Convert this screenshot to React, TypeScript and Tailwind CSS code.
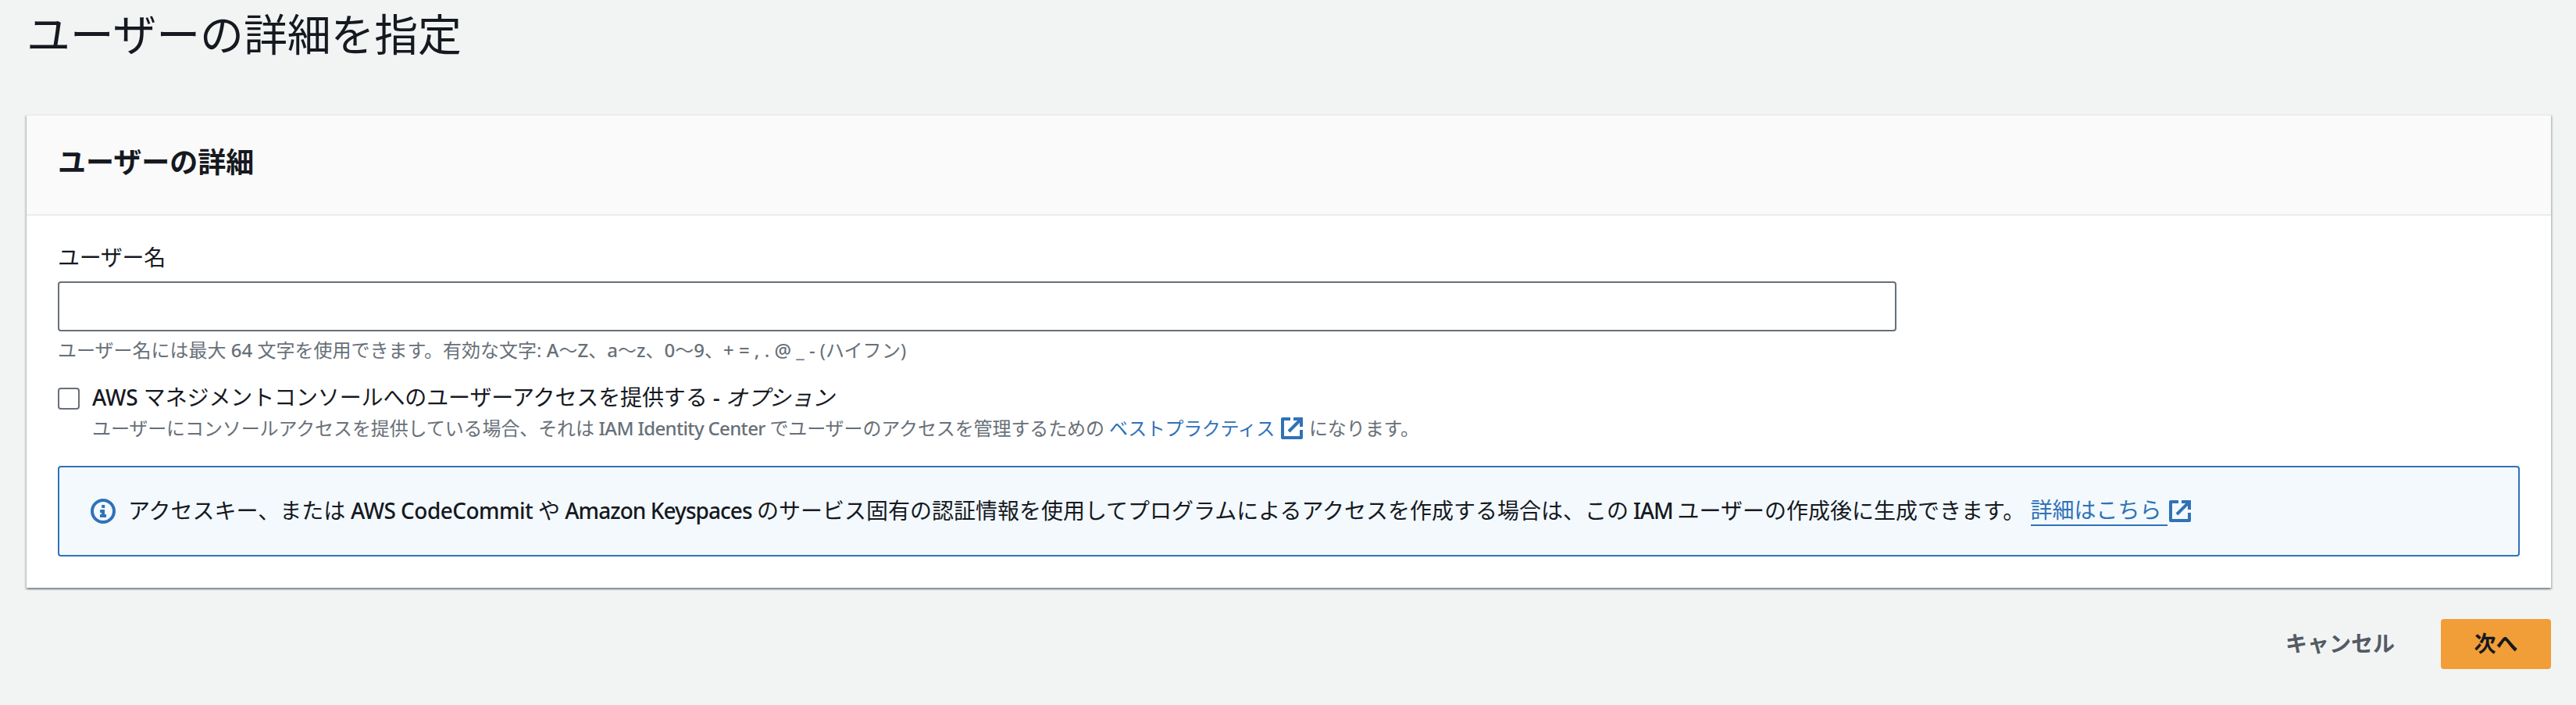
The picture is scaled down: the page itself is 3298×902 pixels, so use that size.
import React from "react";

function ExternalIcon({ className }: { className: string }) {
  return (
    <svg viewBox="0 0 16 16" fill="none" stroke="currentColor" strokeWidth="2" className={`h-8 w-8 shrink-0 ${className}`}>
      <path d="M9 2h5v5" />
      <path d="m6 10 8-8" />
      <path strokeLinejoin="round" d="M14 9v5H2V2h5" />
    </svg>
  );
}

function InfoIcon() {
  return (
    <svg viewBox="0 0 16 16" fill="none" stroke="currentColor" strokeWidth="2" className="h-8 w-8 shrink-0 text-[#3072b8]">
      <circle cx="8" cy="8" r="7" />
      <path d="M8 11V8H6.05" />
      <path d="M10 11H6" />
      <path d="M7.1 5h2" />
    </svg>
  );
}

export default function App() {
  return (
    <div className="flex h-[902px] w-[3298px] flex-col overflow-hidden bg-[#f2f4f4] pl-[34px] pr-8 font-['Noto_Sans','Noto_Sans_CJK_JP',sans-serif] text-[28px] leading-10 text-[#16191f]">
      <h1 className="mt-[7px] h-[73px] whitespace-nowrap text-[56px] leading-[72px] tracking-[-0.2px]">ユーザーの詳細を指定</h1>

      <section className="mt-[66px] flex h-[606px] shrink-0 flex-col border-t-2 border-[#eaeded] bg-white shadow-[0_2px_2px_0_rgba(0,28,36,0.3),2px_2px_2px_0_rgba(0,28,36,0.15),-2px_2px_2px_0_rgba(0,28,36,0.15)]">
        <header className="flex h-32 shrink-0 items-center border-b-2 border-[#eaeded] bg-[#fafafa] px-10 pb-[7px]">
          <h2 className="text-[36px] font-bold leading-[44px]">ユーザーの詳細</h2>
        </header>
        <div className="flex flex-col px-10 pt-[31px]">
          <label htmlFor="name" className="h-[45px] leading-[44px] tracking-[-0.3px]">ユーザー名</label>
          <input id="name" className="mt-2 h-16 w-[2354px] rounded-[4px] border-2 border-[#687078] bg-white px-5" />
          <p className="mt-1 h-10 whitespace-nowrap text-[24px] text-[#687078]">
            ユーザー名には最大 <span className="font-medium">64</span> 文字を使用できます。有効な文字: <span className="font-medium">A</span>〜<span className="font-medium">Z</span>、<span className="font-medium">a</span>〜<span className="font-medium">z</span>、<span className="font-medium">0</span>〜<span className="font-medium">9</span>、<span className="font-medium">+ = , . @ _ -</span> (ハイフン)
          </p>
          <div className="mt-5 flex gap-4">
            <input type="checkbox" className="mt-2 h-7 w-7 shrink-0 appearance-none rounded-[4px] border-2 border-[#687078] bg-white" />
            <div className="flex flex-col">
              <div className="h-[42px] whitespace-nowrap tracking-[-0.12px]">
                <span className="font-medium">AWS</span> マネジメントコンソールへのユーザーアクセスを提供する <span className="font-medium">-</span> <i>オプション</i>
              </div>
              <div className="flex h-9 items-center whitespace-pre text-[24px] leading-9 tracking-[-0.1px] text-[#687078]">
                <span>ユーザーにコンソールアクセスを提供している場合、それは<span className="font-medium tracking-[-0.65px]"> IAM Identity Center </span>でユーザーのアクセスを管理するための </span>
                <a className="tracking-[-0.35px] text-[#3072b8]">ベストプラクティス</a>
                <ExternalIcon className="mx-[6px] text-[#3072b8]" />
                <span>になります。</span>
              </div>
            </div>
          </div>
          <div className="mt-[30px] flex h-[116px] items-center whitespace-pre rounded-[4px] border-2 border-[#3072b8] bg-[#f3f9fd] px-10">
            <InfoIcon />
            <span className="ml-4 pb-[2px]">アクセスキー、または<span className="font-medium tracking-[-0.55px]"> AWS CodeCommit </span>や<span className="font-medium tracking-[-0.95px]"> Amazon Keyspaces </span>のサービス固有の認証情報を使用してプログラムによるアクセスを作成する場合は、この<span className="font-medium tracking-[-1.2px]"> IAM </span>ユーザーの作成後に生成できます。 </span>
            <a className="h-[38px] border-b-2 border-[#3072b8] leading-[34px] text-[#3072b8]">詳細はこちら </a>
            <ExternalIcon className="text-[#3072b8]" />
          </div>
        </div>
      </section>

      <footer className="mt-10 flex h-16 shrink-0 justify-end font-bold">
        <button className="px-[42px] pb-[2px] text-[#545b64]">キャンセル</button>
        <button className="ml-[17px] w-[141px] rounded-[4px] bg-[#f29e38] pb-[2px]">次へ</button>
      </footer>
    </div>
  );
}
